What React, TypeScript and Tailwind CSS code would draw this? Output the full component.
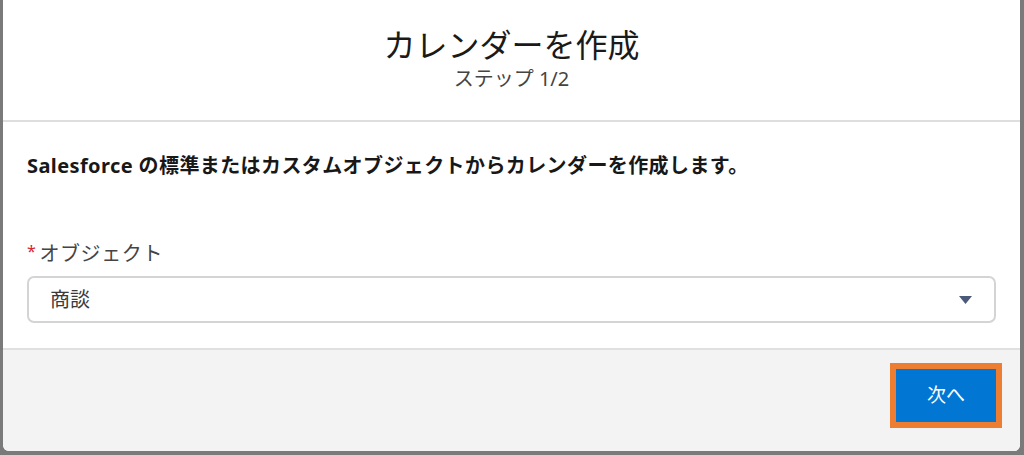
import React from "react";

export default function App() {
  const font = { fontFamily: '"Noto Sans", "Noto Sans CJK JP", sans-serif' };
  return (
    <div className="w-[1024px] h-[455px] bg-[#7a7a7a] overflow-hidden" style={font}>
      <div className="ml-[3px] w-[1017px] h-[451px] bg-white rounded-b-[6px] flex flex-col overflow-hidden">
        <div className="h-[122px] flex flex-col items-center pt-[25px] border-b-2 border-[#dedede]">
          <div className="text-[32px] leading-[40px] text-[#1a1a1a]">カレンダーを作成</div>
          <div className="text-[20px] leading-[26px] text-[#444444] mt-[1px]">ステップ 1/2</div>
        </div>
        <div className="h-[226px] px-[24px] pt-[30px]">
          <div className="text-[20px] leading-[28px] text-[#181818] font-bold tracking-[0.4px]">
            Salesforce の標準またはカスタムオブジェクトからカレンダーを作成します。
          </div>
          <div className="mt-[60px] flex items-center h-[28px] text-[20px] text-[#444444] tracking-[0.6px]">
            <span className="text-[#d8262f] text-[16px] mr-[3px] -mt-[6px]">*</span>
            <span>オブジェクト</span>
          </div>
          <div className="mt-[8px] h-[47px] border-2 border-[#d4d4d4] rounded-[7px] flex items-center justify-between pl-[21px] pr-[22px]">
            <span className="text-[20px] text-[#3a3a3a]">商談</span>
            <svg width="13" height="8" viewBox="0 0 13 8">
              <path d="M0 0 L13 0 L6.5 8 Z" fill="#4a5a78" />
            </svg>
          </div>
        </div>
        <div className="flex-1 bg-[#f3f3f3] border-t-2 border-[#e0e0e0] flex justify-end items-start pt-[13px] pr-[18px]">
          <div className="border-[6px] border-[#ed7d31]">
            <button className="w-[100px] h-[53px] bg-[#0176d3] text-white text-[19px] flex items-center justify-center">
              次へ
            </button>
          </div>
        </div>
      </div>
    </div>
  );
}
